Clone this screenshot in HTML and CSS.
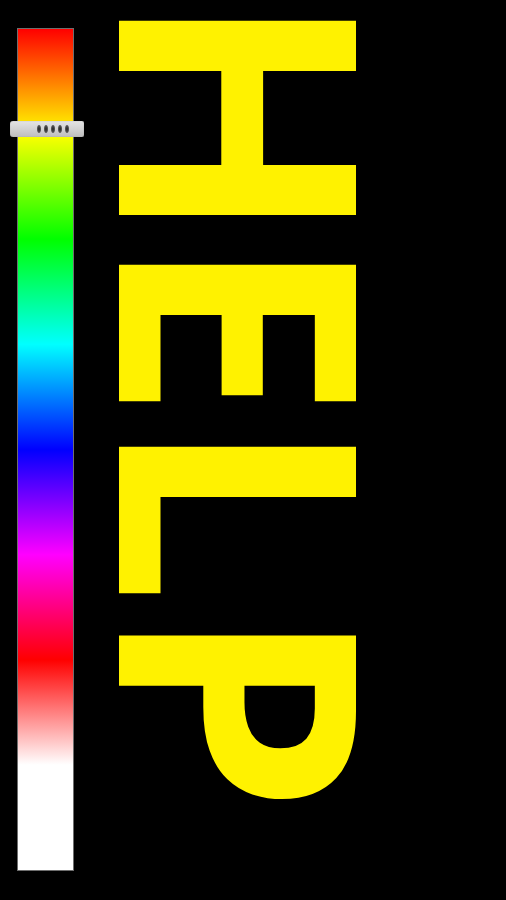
FILE: index.html
```html
<!DOCTYPE html>
<html>
<head>
<meta charset="utf-8">
<link rel="stylesheet" href="styles.css">
</head>
<body>
<div class="page">
  <div class="slider">
    <div class="handle">
      <span class="dot"></span><span class="dot"></span><span class="dot"></span><span class="dot"></span><span class="dot"></span>
    </div>
  </div>
  <div class="word"><span class="lh">H</span><span class="le">E</span><span class="ll">L</span><span class="lp">P</span></div>
</div>
</body>
</html>
```
FILE: styles.css
```css
html, body {
  margin: 0;
  padding: 0;
  background: #000;
}
.page {
  display: flex;
  align-items: flex-start;
  width: 506px;
  height: 900px;
  background: #000;
  overflow: hidden;
}
.slider {
  position: relative;
  flex: none;
  margin: 28px 0 0 17px;
  width: 57px;
  height: 843px;
  box-sizing: border-box;
  border: 1px solid #6e6e6e;
  background: linear-gradient(to bottom,
    #ff0000 0%,
    #ffff00 12.5%,
    #00ff00 25%,
    #00ffff 37.5%,
    #0000ff 50%,
    #ff00ff 62.5%,
    #ff0000 75%,
    #ffffff 87.5%,
    #ffffff 100%);
}
.handle {
  position: absolute;
  top: 92px;
  left: -8px;
  width: 74px;
  height: 16px;
  box-sizing: border-box;
  border-radius: 3px 2px 2px 3px;
  background: linear-gradient(to bottom, #e4e4e4 0%, #d2d2d2 50%, #bdbdbd 100%);
  box-shadow: inset 0 0 1px #888;
  display: flex;
  align-items: center;
  padding-left: 27px;
  gap: 3px;
}
.dot {
  width: 4px;
  height: 8px;
  border-radius: 50%;
  background: radial-gradient(ellipse at center, #222 0%, #555 60%, #999 100%);
}
.word {
  flex: none;
  writing-mode: vertical-rl;
  text-orientation: sideways;
  font-family: "Open Sans", "DejaVu Sans", sans-serif;
  font-weight: 700;
  font-size: 332px;
  line-height: 332px;
  color: #fff200;
  margin-left: 8px;
  margin-top: -9px;
}
.lh { letter-spacing: -10px; }
.le { letter-spacing: -4px; }
.ll { letter-spacing: 1px; }
.lp { letter-spacing: 0; }
```
